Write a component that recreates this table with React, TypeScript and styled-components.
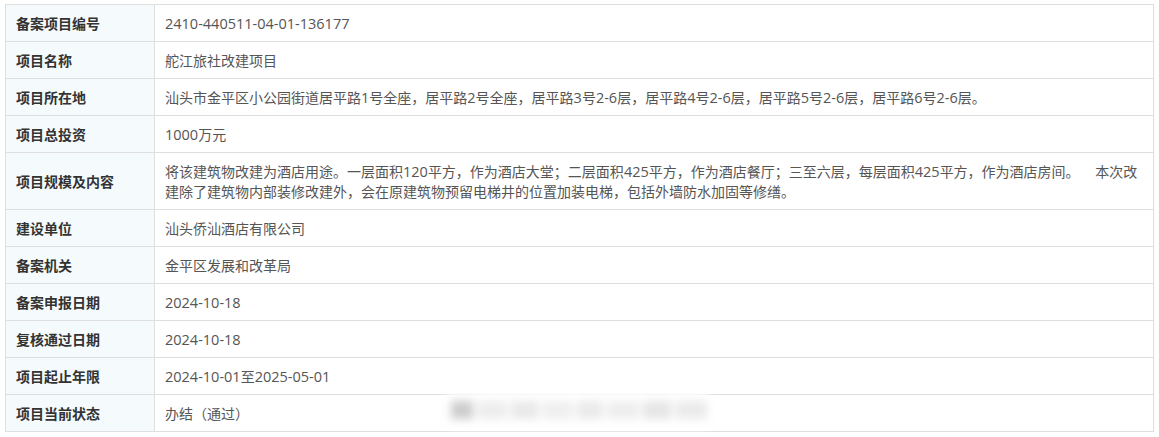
import styled, { createGlobalStyle } from 'styled-components';

const GlobalStyle = createGlobalStyle`
	body {
		margin: 0;
		background: #fff;
		font-family: "Noto Sans CJK SC", "Noto Sans", sans-serif;
	}
`;

const Wrap = styled.div`
	position: relative;
	padding: 4px 0 0 5px;
	width: 1149px;
`;

const Table = styled.table`
	width: 1149px;
	border-collapse: collapse;
	table-layout: fixed;
	font-size: 14px;
	line-height: 20px;
`;

const Label = styled.th`
	width: 128px;
	padding: 8px 10px;
	border: 1px solid #dedede;
	background: #f5fbfc;
	color: #333;
	font-weight: bold;
	text-align: left;
	vertical-align: middle;
`;

const Value = styled.td`
	padding: 8px 10px;
	border: 1px solid #dedede;
	color: #555;
	vertical-align: middle;
`;

// digits in the source are a touch wider than the CJK font's own
const Latin = styled.span`
	font-family: "Open Sans", "Noto Sans", sans-serif;
	font-size: 14.5px;
	line-height: 1;
`;

// blurred watermark sitting over the last row
const Smudge = styled.div`
	position: absolute;
	left: 447px;
	top: 392px;
	width: 262px;
	height: 36px;
	background: #fff;
	display: flex;
	align-items: center;
	gap: 4px;
	padding-left: 4px;
	box-sizing: border-box;
	filter: blur(4px);
`;

const Blob = styled.span<{ $w: number; $tone: string }>`
	display: block;
	width: ${p => p.$w}px;
	height: 18px;
	background: ${p => p.$tone};
`;

const rows: [string, string][] = [
	['备案项目编号', '2410-440511-04-01-136177'],
	['项目名称', '舵江旅社改建项目'],
	['项目所在地', '汕头市金平区小公园街道居平路1号全座，居平路2号全座，居平路3号2-6层，居平路4号2-6层，居平路5号2-6层，居平路6号2-6层。'],
	['项目总投资', '1000万元'],
	['项目规模及内容', '将该建筑物改建为酒店用途。一层面积120平方，作为酒店大堂；二层面积425平方，作为酒店餐厅；三至六层，每层面积425平方，作为酒店房间。\u00a0\u00a0\u00a0\u00a0 本次改建除了建筑物内部装修改建外，会在原建筑物预留电梯井的位置加装电梯，包括外墙防水加固等修缮。'],
	['建设单位', '汕头侨汕酒店有限公司'],
	['备案机关', '金平区发展和改革局'],
	['备案申报日期', '2024-10-18'],
	['复核通过日期', '2024-10-18'],
	['项目起止年限', '2024-10-01至2025-05-01'],
	['项目当前状态', '办结（通过）'],
];

const blobs: [number, string][] = [
	[22, '#cdcdcd'], [30, '#ededed'], [28, '#e9e9e9'], [30, '#efefef'],
	[26, '#eaeaea'], [32, '#eeeeee'], [28, '#e6e6e6'], [32, '#ebebeb'],
];

function withLatin(text: string) {
	return text.split(/([0-9A-Za-z-]+)/).map((part, i) =>
		i % 2 ? <Latin key={i}>{part}</Latin> : part
	);
}

export default function App() {
	return (
		<Wrap>
			<GlobalStyle />
			<Table>
				<tbody>
					{rows.map(([k, v]) => (
						<tr key={k}>
							<Label>{k}</Label>
							<Value>{withLatin(v)}</Value>
						</tr>
					))}
				</tbody>
			</Table>
			<Smudge>
				{blobs.map(([w, c], i) => <Blob key={i} $w={w} $tone={c} />)}
			</Smudge>
		</Wrap>
	);
}
